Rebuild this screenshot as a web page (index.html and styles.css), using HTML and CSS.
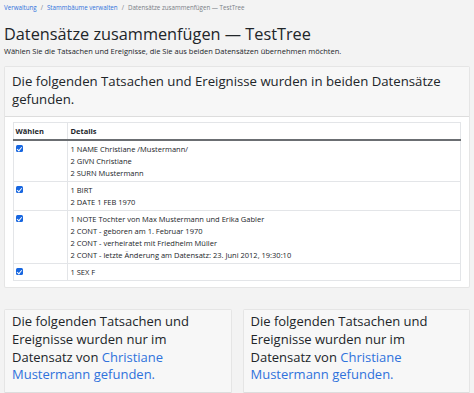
FILE: index.html
```html
<!DOCTYPE html>
<html lang="de">
<head>
<meta charset="utf-8">
<link rel="stylesheet" href="styles.css">
</head>
<body>
<nav class="crumbs">
  <a href="#">Verwaltung</a><span class="sep">/</span><a href="#">Stammbäume verwalten</a><span class="sep">/</span><span class="cur">Datensätze zusammenfügen — TestTree</span>
</nav>
<h1 class="title">Datensätze zusammenfügen — TestTree</h1>
<p class="lead">Wählen Sie die Tatsachen und Ereignisse, die Sie aus beiden Datensätzen übernehmen möchten.</p>

<section class="card">
  <h2 class="card-head">Die folgenden Tatsachen und Ereignisse wurden in beiden Datensätze gefunden.</h2>
  <div class="card-body">
    <table class="facts">
      <thead>
        <tr><th class="col-sel">Wählen</th><th class="col-det">Details</th></tr>
      </thead>
      <tbody>
        <tr><td class="col-sel"><span class="cb"></span></td><td class="col-det">1 NAME Christiane /Mustermann/<br>2 GIVN Christiane<br>2 SURN Mustermann</td></tr>
        <tr><td class="col-sel"><span class="cb"></span></td><td class="col-det">1 BIRT<br>2 DATE 1 FEB 1970</td></tr>
        <tr><td class="col-sel"><span class="cb"></span></td><td class="col-det">1 NOTE Tochter von Max Mustermann und Erika Gabler<br>2 CONT - geboren am 1. Februar 1970<br>2 CONT - verheiratet mit Friedhelm Müller<br>2 CONT - letzte Änderung am Datensatz: 23. Juni 2012, 19:30:10</td></tr>
        <tr><td class="col-sel"><span class="cb"></span></td><td class="col-det">1 SEX F</td></tr>
      </tbody>
    </table>
  </div>
</section>

<div class="pair">
  <section class="card">
    <h2 class="card-head">Die folgenden Tatsachen und Ereignisse wurden nur im Datensatz von <a href="#">Christiane Mustermann</a> <a href="#">gefunden.</a></h2>
  </section>
  <section class="card">
    <h2 class="card-head">Die folgenden Tatsachen und Ereignisse wurden nur im Datensatz von <a href="#">Christiane Mustermann</a> <a href="#">gefunden.</a></h2>
  </section>
</div>
</body>
</html>
```
FILE: styles.css
```css
html, body {
  margin: 0;
  padding: 0;
}
body {
  background: #f3f3f3;
  color: #212529;
  font-family: "Open Sans", "Noto Sans", sans-serif;
  padding: 0 4px;
  width: 466px;
  overflow: hidden;
}
a {
  color: #2f72dc;
  text-decoration: none;
}
.crumbs {
  font-size: 6.2px;
  line-height: 10px;
  padding-top: 3px;
  color: #7a8087;
}
.crumbs .sep {
  margin: 0 4px;
  color: #7a8087;
}
.title {
  font-weight: 400;
  font-size: 16.3px;
  line-height: 24px;
  margin: 9px 0 0;
}
.lead {
  font-size: 7.5px;
  line-height: 12px;
  margin: -1px 0 0;
}
.card {
  background: #fff;
  border: 1px solid rgba(0,0,0,.1);
  border-radius: 2px;
  margin-top: 9px;
}
.card-head {
  background: #f7f7f7;
  border-bottom: 1px solid rgba(0,0,0,.1);
  font-weight: 400;
  font-size: 13.2px;
  line-height: 18px;
  margin: 0;
  padding: 5px 7px 8px;
}
.card-body {
  padding: 5px 8px 6px;
}
.facts {
  width: 100%;
  border-collapse: collapse;
  font-size: 7.5px;
  line-height: 12px;
}
.facts th, .facts td {
  border: 1px solid #e3e5e8;
  text-align: left;
  vertical-align: top;
  padding: 2px 2px;
}
.facts th {
  font-weight: 700;
  border-bottom: 2px solid #6b6e72;
}
.facts .col-sel {
  width: 49px;
  padding-left: 1.5px;
}
.facts .col-det {
  padding-left: 3px;
}
.cb {
  display: inline-block;
  width: 7px;
  height: 7px;
  background: #1766e0;
  border-radius: 1.5px;
  margin-top: 2px;
  position: relative;
  vertical-align: top;
}
.cb::after {
  content: "";
  position: absolute;
  left: 2.3px;
  top: 0.6px;
  width: 1.8px;
  height: 3.8px;
  border: solid #fff;
  border-width: 0 1.2px 1.2px 0;
  transform: rotate(40deg);
}
.pair {
  display: grid;
  grid-template-columns: 1fr 1fr;
  gap: 11px;
  margin-top: 21px;
}
.pair .card {
  margin-top: 0;
}
.pair .card-head {
  padding: 3px 7px 8px;
  font-size: 13px;
  line-height: 17.8px;
}
```
